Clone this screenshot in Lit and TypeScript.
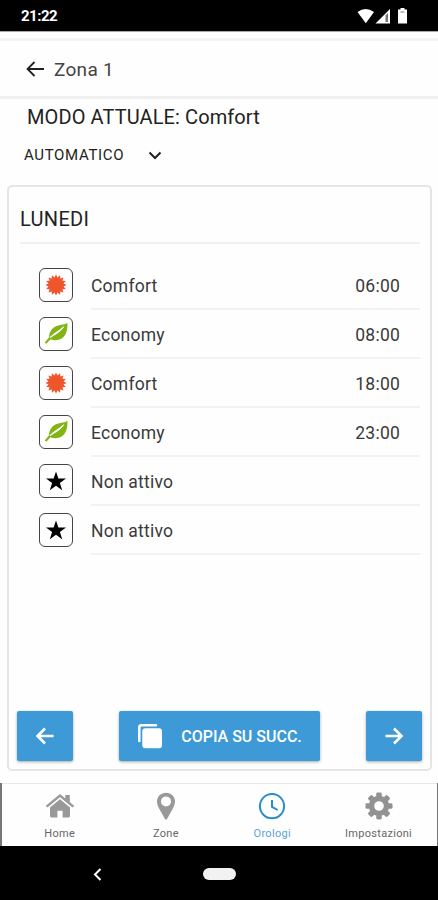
import { LitElement, html, css, svg } from "lit";
import { customElement } from "lit/decorators.js";
import { classMap } from "lit/directives/class-map.js";

type Mode = "comfort" | "economy" | "off";

const starburst = (): string => {
  const pts: string[] = [];
  for (let i = 0; i < 32; i++) {
    const r = i % 2 ? 7.7 : 10.6;
    const a = (i * Math.PI) / 16;
    pts.push(`${(17 + r * Math.sin(a)).toFixed(2)},${(17 - r * Math.cos(a)).toFixed(2)}`);
  }
  return pts.join(" ");
};

const modeIcons = {
  comfort: svg`<polygon points=${starburst()} fill="#f0562b"/>`,
  economy: svg`<path d="M28.400 6C28.800 12 27.400 18.500 22.600 21.600C19 23.700 14.600 23.500 11.600 22.200C10 23.600 8.700 25 7.400 26.800L5.800 25.600C7.200 23.600 8.800 21.800 10.200 20.200C9.800 16 12.200 11.800 16.400 9.400C20 7.600 24.500 8.200 28.400 6Z" fill="#82b414"/><path d="M11 20.600C14 16.800 19.500 14.600 24.600 9.800C21.500 15.200 15.500 17.600 11 20.600Z" fill="#fff" stroke="#fff" stroke-width=".9"/>`,
  off: svg`<path d="M17 7.400L19.400 14.600H27L20.900 19L23.200 26.300L17 21.800L10.800 26.300L13.100 19L7 14.600H14.600Z" fill="#000"/>`,
};

const tabIcons = {
  home: svg`<path d="M1.600 14.600L15 3.600L28.400 14.600" fill="none" stroke="#999" stroke-width="2.500"/><path d="M20.300 3H24.800V10.800L20.300 7Z" fill="#999"/><path d="M15 7.300L25 15.600V24Q25 25.400 23.600 25.400H17.600V18.800H12.400V25.400H6.400Q5 25.400 5 24V15.600Z" fill="#999"/>`,
  pin: svg`<path fill-rule="evenodd" d="M15 .8C9.900 .8 6 4.600 6 9.500C6 12.300 7.100 14.500 8.500 17.200L14 27Q15 28.400 16 27L21.500 17.200C22.900 14.500 24 12.300 24 9.500C24 4.600 20.100 .8 15 .8ZM15 4.400A5 5 0 1 1 15 14.400A5 5 0 0 1 15 4.400Z" fill="#999"/>`,
  clock: svg`<circle cx="15" cy="14.200" r="12.100" fill="none" stroke="#2a8dcb" stroke-width="2"/><path d="M15 8V14.800L20.700 18" fill="none" stroke="#2a8dcb" stroke-width="2"/>`,
  gear: svg`<circle cx="15" cy="14" r="7.500" fill="none" stroke="#929292" stroke-width="5.400"/>${[0, 45, 90, 135, 180, 225, 270, 315].map(
    (a) => svg`<rect x="12.200" y=".5" width="5.600" height="5" rx="1.400" fill="#929292" transform="rotate(${a} 15 14)"/>`
  )}`,
};

@customElement("app-root")
export class AppRoot extends LitElement {
  static styles = css`
    :host {
      display: flex;
      flex-direction: column;
      width: 438px;
      height: 900px;
      overflow: hidden;
      background: #fefefe;
      color: #222;
      font-family: Roboto, sans-serif;
    }
    * { box-sizing: border-box; }
    svg { display: block; flex: none; }
    .status {
      height: 31px;
      flex: none;
      background: #000;
      color: #fff;
      display: flex;
      justify-content: space-between;
      padding: 0 29px 0 21px;
      font: 700 15px/33px Roboto, sans-serif;
      letter-spacing: -0.5px;
    }
    .strip {
      height: 10px;
      flex: none;
      border-top: 1px solid #aaa;
      border-bottom: 3px solid #f4f4f4;
    }
    .header {
      height: 58px;
      flex: none;
      border-bottom: 3px solid #efefef;
      display: flex;
      align-items: center;
      gap: 9px;
      padding: 0 0 0 26px;
      color: #444;
      font-size: 19px;
      letter-spacing: 0.3px;
    }
    .header span { padding-top: 2px; }
    .current {
      height: 36px;
      flex: none;
      padding-left: 27px;
      font-size: 20px;
      line-height: 36px;
      letter-spacing: 0.1px;
    }
    .select {
      height: 50px;
      flex: none;
      display: flex;
      align-items: flex-start;
      gap: 24px;
      padding: 10px 0 0 24px;
      font-size: 15px;
      line-height: 20px;
      letter-spacing: 0.65px;
    }
    .select svg { margin: 6px 0 0 -0.5px; }
    .card {
      height: 586px;
      flex: none;
      margin: 0 6px 0 7px;
      border: 2px solid #e5e5e5;
      border-radius: 5px;
      padding: 0 10px 8px 11px;
      display: flex;
      flex-direction: column;
    }
    .day {
      height: 57px;
      border-bottom: 2px solid #f0f0f0;
      font-size: 20px;
      line-height: 64px;
      letter-spacing: 0.3px;
      margin-bottom: 17px;
    }
    .row { display: flex; padding-left: 19px; height: 49px; }
    .mode {
      width: 34px;
      height: 34px;
      margin: 7px 18px 0 0;
      border: 1.500px solid #444;
      border-radius: 6px;
      display: flex;
      align-items: center;
      justify-content: center;
    }
    .entry {
      flex: 1;
      display: flex;
      justify-content: space-between;
      border-bottom: 2px solid #f2f2f2;
      padding-right: 20px;
      font-size: 17.500px;
      line-height: 50px;
      letter-spacing: 0.22px;
      color: #3a3a3a;
    }
    .actions {
      margin-top: auto;
      display: flex;
      justify-content: space-between;
      margin-left: -3px;
      margin-right: -2px;
    }
    .btn {
      height: 50px;
      width: 56px;
      border-radius: 2px;
      background: #3d9ad7;
      box-shadow: 0 1px 3px rgba(0, 0, 0, 0.35);
      display: flex;
      align-items: center;
      justify-content: center;
      color: #fff;
      font-weight: 500;
      font-size: 16px;
    }
    .btn.copy { width: 201px; gap: 18px; }
    .tabs {
      height: 63px;
      flex: none;
      margin-top: 12px;
      border: solid #777;
      border-width: 0 1px 0 2px;
      display: grid;
      grid-template-columns: repeat(4, 106.300px);
      padding-left: 4.500px;
      box-shadow: inset 0 1px #e8e8e8;
    }
    .tab {
      display: flex;
      flex-direction: column;
      align-items: center;
      padding-top: 9px;
      font-size: 11px;
      line-height: 14px;
      letter-spacing: 0.3px;
      color: #666;
    }
    .tab svg { margin-bottom: 6px; }
    .tab.active { color: #5aa2dc; }
    .nav { flex: 1; background: #000; display: flex; padding: 22px 0 0 93px; gap: 101px; }
    .pill { width: 33px; height: 12px; border-radius: 6px; background: #f2f2f2; }
  `;

  private rows: { mode: Mode; label: string; time: string }[] = [
    { mode: "comfort", label: "Comfort", time: "06:00" },
    { mode: "economy", label: "Economy", time: "08:00" },
    { mode: "comfort", label: "Comfort", time: "18:00" },
    { mode: "economy", label: "Economy", time: "23:00" },
    { mode: "off", label: "Non attivo", time: "" },
    { mode: "off", label: "Non attivo", time: "" },
  ];

  private tabs = [
    { icon: tabIcons.home, label: "Home", active: false },
    { icon: tabIcons.pin, label: "Zone", active: false },
    { icon: tabIcons.clock, label: "Orologi", active: true },
    { icon: tabIcons.gear, label: "Impostazioni", active: false },
  ];

  render() {
    return html`
      <div class="status">
        <span>21:22</span>
        <svg width="52" height="31" viewBox="0 0 52 31" fill="#fff">
          <path d="M0.500 12Q8.500 6 17 12L8.800 23.200Z" />
          <path d="M18.500 23.500L33 9V23.500Z" />
          <path d="M28.500 15.500L31 13V22H28.500Z" fill="#777" />
          <path d="M41 9.500H43.500V8H47.500V9.500H50V23.500H41Z" />
          <path d="M43.500 12H47.500" stroke="#777" />
        </svg>
      </div>
      <div class="strip"></div>
      <div class="header">
        <svg width="19" height="18" viewBox="0 0 19 18" fill="none" stroke="#222" stroke-width="1.800">
          <path d="M18 9H2M8.500 2L1.500 9L8.500 16" />
        </svg>
        <span>Zona 1</span>
      </div>
      <div class="current">MODO ATTUALE: Comfort</div>
      <div class="select">
        <span>AUTOMATICO</span>
        <svg width="14" height="9" viewBox="0 0 14 9" fill="none" stroke="#222" stroke-width="2">
          <path d="M1.500 1.500L7 7L12.500 1.500" />
        </svg>
      </div>
      <div class="card">
        <div class="day">LUNEDI</div>
        ${this.rows.map(
          (r) => html`<div class="row">
            <div class="mode"><svg width="34" height="34" viewBox="0 0 34 34">${modeIcons[r.mode]}</svg></div>
            <div class="entry"><span>${r.label}</span><span>${r.time}</span></div>
          </div>`
        )}
        <div class="actions">
          <div class="btn">
            <svg width="20" height="18" viewBox="0 0 20 18" fill="none" stroke="#fff" stroke-width="2.600">
              <path d="M18.500 9H3M10 1.500L2.500 9L10 16.500" />
            </svg>
          </div>
          <div class="btn copy">
            <svg width="26" height="26" viewBox="0 0 26 26">
              <path d="M2.300 18V4.500Q2.300 2.300 4.500 2.300H19" fill="none" stroke="#fff" stroke-width="2.500" stroke-linecap="round" />
              <rect x="5.300" y="5.300" width="19.700" height="20" rx="3" fill="#fff" />
            </svg>
            <span>COPIA SU SUCC.</span>
          </div>
          <div class="btn">
            <svg width="20" height="18" viewBox="0 0 20 18" fill="none" stroke="#fff" stroke-width="2.600">
              <path d="M1.500 9H17M10 1.500L17.500 9L10 16.500" />
            </svg>
          </div>
        </div>
      </div>
      <div class="tabs">
        ${this.tabs.map(
          (t) => html`<div class=${classMap({ tab: true, active: t.active })}>
            <svg width="30" height="29" viewBox="0 0 30 29">${t.icon}</svg>
            <span>${t.label}</span>
          </div>`
        )}
      </div>
      <div class="nav">
        <svg width="9" height="13" viewBox="0 0 9 13" fill="none" stroke="#fff" stroke-width="2">
          <path d="M7.500 1L2 6.500L7.500 12" />
        </svg>
        <div class="pill"></div>
      </div>
    `;
  }
}
